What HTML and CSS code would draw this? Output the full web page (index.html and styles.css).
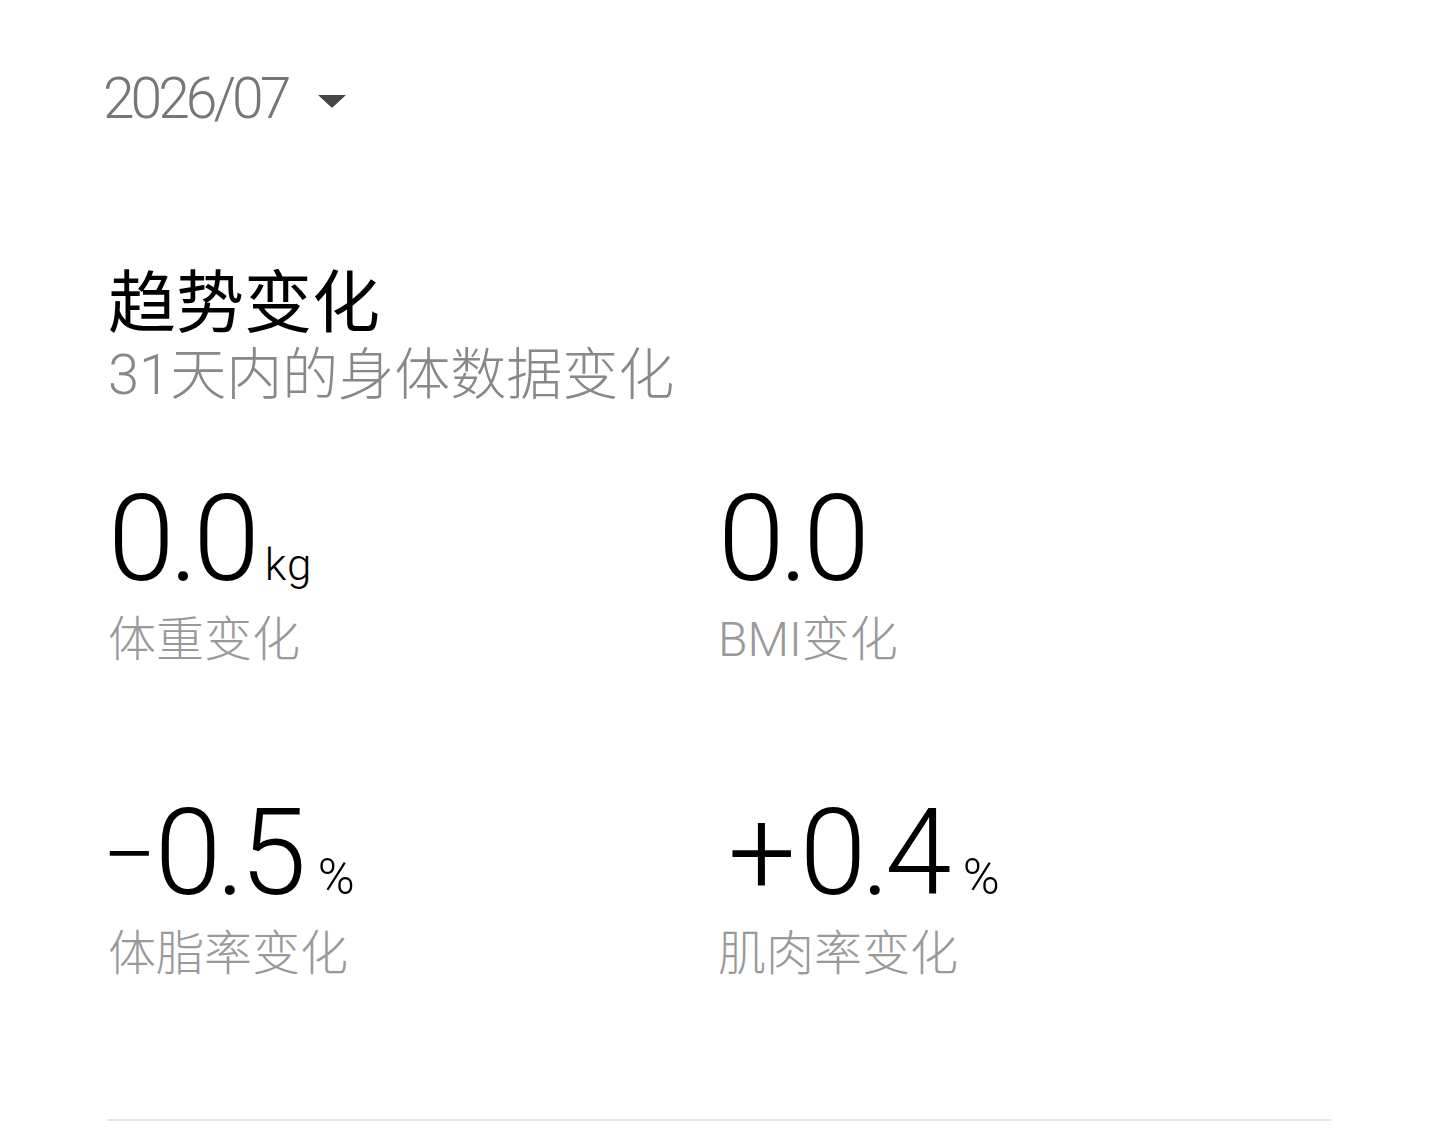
FILE: index.html
```
<!DOCTYPE html>
<html lang="zh-CN">
<head>
    <meta charset="UTF-8">
    <meta name="viewport" content="width=device-width, initial-scale=1.0">
    <title>趋势变化</title>
    <link rel="stylesheet" href="styles.css">
</head>
<body>
    <!-- Month picker -->
    <div class="month-picker">
        <span class="month">2026/07</span>
        <svg class="caret" width="30" height="14" viewBox="0 0 30 14">
            <path d="M1 1 L29 1 L16 13 Q15 14 14 13 Z" fill="#444"/>
        </svg>
    </div>

    <!-- Trend section -->
    <div class="trend">
        <h1 class="trend-title">趋势变化</h1>
        <p class="trend-sub">31天内的身体数据变化</p>

        <div class="stats">
            <div class="stat">
                <div class="value"><span class="num">0.0</span><span class="unit">kg</span></div>
                <div class="label">体重变化</div>
            </div>
            <div class="stat">
                <div class="value"><span class="num">0.0</span></div>
                <div class="label">BMI变化</div>
            </div>
            <div class="stat">
                <div class="value"><span class="num"><span class="sign minus">&minus;</span>0.5</span><span class="unit pct">%</span></div>
                <div class="label">体脂率变化</div>
            </div>
            <div class="stat">
                <div class="value"><span class="num"><span class="sign plus">+</span>0.4</span><span class="unit pct">%</span></div>
                <div class="label">肌肉率变化</div>
            </div>
        </div>
    </div>

    <div class="divider"></div>
</body>
</html>
```

FILE: styles.css
```
/* Base */
body {
    margin: 0;
    padding: 0;
    background: #ffffff;
    font-family: Roboto, "Noto Sans CJK SC", sans-serif;
    font-weight: 300;
    color: #000;
}

/* Month picker */
.month-picker {
    display: flex;
    align-items: center;
    gap: 30px;
    padding: 68px 0 0 103px;
    height: 62px;
}

.month {
    font-size: 57px;
    line-height: 62px;
    color: #777;
    letter-spacing: -4px;
}

.caret {
    margin-top: 4px;
}

/* Trend section */
.trend {
    padding: 0 0 0 108px;
}

.trend-title {
    margin: 136px 0 0;
    font-size: 68px;
    line-height: 76px;
    font-weight: 400;
    color: #000;
}

.trend-sub {
    margin: 0;
    font-size: 56px;
    line-height: 66px;
    color: #888;
}

/* Stats grid */
.stats {
    display: grid;
    grid-template-columns: 610px 610px;
    row-gap: 130px;
    margin-top: 76px;
}

.value {
    display: flex;
    align-items: baseline;
    height: 110px;
}

.num {
    font-size: 120px;
    line-height: 110px;
    letter-spacing: -5px;
}

.sign {
    letter-spacing: 0;
}

/* the minus is set a bit smaller so it sits tight against the digits */
.sign.minus {
    font-size: 96px;
    vertical-align: 6px;
    margin-left: -6px;
    margin-right: -2px;
}

.sign.plus {
    margin-left: 10px;
    margin-right: 4px;
}

.unit {
    font-size: 44px;
    margin-left: 10px;
    letter-spacing: 1px;
}

.unit.pct {
    font-size: 50px;
    margin-left: 16px;
}

.label {
    margin-top: 18px;
    font-size: 48px;
    line-height: 56px;
    color: #999;
}

/* Bottom divider */
.divider {
    margin: 137px 107px 0 107px;
    height: 2px;
    background: #e6e6e6;
}
```
